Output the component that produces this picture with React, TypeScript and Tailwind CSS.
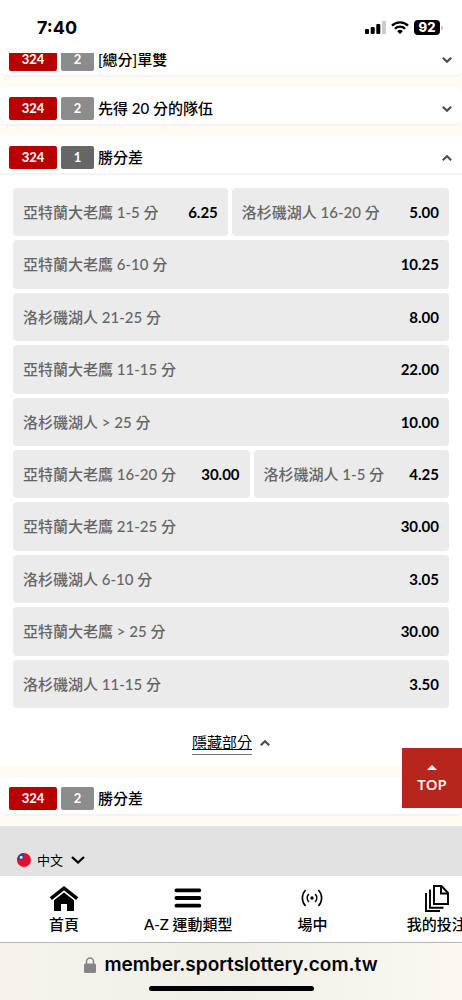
import clsx from "clsx";

interface Selection {
  name: string;
  odds: string;
}

interface MarketRowProps {
  code: string;
  count: number;
  title: string;
  open?: boolean;
}

const lines: Selection[][] = [
  [
    { name: "亞特蘭大老鷹 1-5 分", odds: "6.25" },
    { name: "洛杉磯湖人 16-20 分", odds: "5.00" },
  ],
  [{ name: "亞特蘭大老鷹 6-10 分", odds: "10.25" }],
  [{ name: "洛杉磯湖人 21-25 分", odds: "8.00" }],
  [{ name: "亞特蘭大老鷹 11-15 分", odds: "22.00" }],
  [{ name: "洛杉磯湖人 > 25 分", odds: "10.00" }],
  [
    { name: "亞特蘭大老鷹 16-20 分", odds: "30.00" },
    { name: "洛杉磯湖人 1-5 分", odds: "4.25" },
  ],
  [{ name: "亞特蘭大老鷹 21-25 分", odds: "30.00" }],
  [{ name: "洛杉磯湖人 6-10 分", odds: "3.05" }],
  [{ name: "亞特蘭大老鷹 > 25 分", odds: "30.00" }],
  [{ name: "洛杉磯湖人 11-15 分", odds: "3.50" }],
];

const Chevron = ({ up = false }: { up?: boolean }) => (
  <svg
    viewBox="0 0 10 8"
    className={clsx("h-2 w-2.5 shrink-0", up && "rotate-180")}
    fill="none"
    stroke="#4d4d4d"
    strokeWidth="2.2"
  >
    <path d="M0.8 1.8 5 5.8 9.2 1.8" />
  </svg>
);

const MarketRow = ({ code, count, title, open = false }: MarketRowProps) => (
  <button
    aria-expanded={open}
    className={clsx(
      "flex w-full items-center border-b-2 border-[#f3f3f8] bg-white pt-2.5 pr-2.5 pb-1 pl-[9px] text-left",
      !open && "rounded-md"
    )}
  >
    <span className="h-[23px] w-12 rounded-xs bg-[#b70000] text-center text-[13px] leading-[23px] font-bold text-white">
      {code}
    </span>
    <span
      className={clsx(
        "ml-1 h-[23px] w-[33px] rounded-xs text-center text-[13px] leading-[23px] font-bold text-white",
        open ? "bg-[#666666]" : "bg-[#8c8c8c]"
      )}
    >
      {count}
    </span>
    <span className="ml-1 flex-1 text-[15px] leading-[23px] font-medium text-black">
      {title}
    </span>
    <Chevron up={open} />
  </button>
);

const StatusBar = () => (
  <header className="flex h-[53px] items-center justify-between bg-white pr-[19px] pl-[37px] pt-0.5 font-['Inter',sans-serif]">
    <span className="text-lg font-bold">7:40</span>
    <div className="flex items-center gap-[5px]">
      <svg viewBox="0 0 21 13" className="h-[13px] w-[21px]">
        <rect x="0" y="8" width="4" height="5" rx="1" />
        <rect x="5.7" y="6" width="4" height="7" rx="1" />
        <rect x="11.3" y="3" width="4" height="10" rx="1" />
        <rect x="17" y="0" width="4" height="13" rx="1" fill="#cccccc" />
      </svg>
      <svg viewBox="0 0 18 13" className="h-[13px] w-[18px]" fill="none" stroke="#000" strokeWidth="2.3">
        <path d="M1 4.6a11.5 11.5 0 0 1 16 0" />
        <path d="M3.9 7.8a7.3 7.3 0 0 1 10.2 0" />
        <path d="M9 13 6.2 10.2a4 4 0 0 1 5.6 0Z" fill="#000" stroke="none" />
      </svg>
      <div className="flex items-center gap-px">
        <span className="h-[15px] w-[26px] rounded-sm bg-black text-center text-[13px] leading-[15px] font-extrabold text-white">
          92
        </span>
        <span className="h-1 w-0.5 rounded-r-full bg-[#c4c4c4]" />
      </div>
    </div>
  </header>
);

const HomeIcon = () => (
  <svg viewBox="0 0 28 25" className="h-[25px] w-7">
    <path d="M0.8 12.6 14 2.2l13.2 10.4" fill="none" stroke="#000" strokeWidth="3.4" />
    <path d="M4 14.2 14 6.4l10 7.8V25h-7v-7h-6v7H4Z" />
  </svg>
);

const MenuIcon = () => (
  <svg viewBox="0 0 28 20" className="h-5 w-7" stroke="#000" strokeWidth="3.8" strokeLinecap="round">
    <path d="M2.4 2.3h23M2.4 10h23M2.4 17.7h23" />
  </svg>
);

const LiveIcon = () => (
  <svg viewBox="0 0 22 18" className="h-[18px] w-[22px]" fill="none" stroke="#000" strokeWidth="1.6">
    <circle cx="11" cy="9" r="1.7" fill="#000" stroke="none" />
    <path d="M7.8 5a6 6 0 0 0 0 8M14.2 5a6 6 0 0 1 0 8" />
    <path d="M4.6 1a11.5 11.5 0 0 0 0 16M17.4 1a11.5 11.5 0 0 1 0 16" />
  </svg>
);

const BetsIcon = () => (
  <svg viewBox="0 0 24 27" className="h-[27px] w-6" fill="none" stroke="#000" strokeWidth="1.9">
    <path d="M9 1h7.5L23 7.8V19H9Z" />
    <path d="M16 1v7.5h7" />
    <path d="M5 4.5v18.2h13.5" />
    <path d="M1 8v18h14" />
  </svg>
);

const navItems = [
  { label: "首頁", icon: <HomeIcon /> },
  { label: "A-Z 運動類型", icon: <MenuIcon /> },
  { label: "場中", icon: <LiveIcon /> },
  { label: "我的投注", icon: <BetsIcon /> },
];

const App = () => {
  return (
    <div className="relative w-full overflow-hidden bg-[#fffbf3] font-['Lato','Noto_Sans_CJK_TC',sans-serif] text-black">
      <StatusBar />

      {/* The list is scrolled, its first row is partly under the status bar */}
      <main className="overflow-hidden">
        <div className="-mt-[15px] flex flex-col gap-2.5">
          <MarketRow code="324" count={2} title="[總分]單雙" />
          <MarketRow code="324" count={2} title="先得 20 分的隊伍" />
          <section className="bg-white">
            <MarketRow code="324" count={1} title="勝分差" open />
            <div className="grid min-h-[533px] auto-rows-fr gap-1 px-[13px] pt-[13px]">
              {lines.map((line) => (
                <div key={line[0].name} className="flex gap-1">
                  {line.map((item) => (
                    <button
                      key={item.name}
                      className="flex flex-auto items-center justify-between rounded bg-[#ebebeb] px-2.5 text-[15px] font-medium whitespace-nowrap"
                    >
                      <span className="text-[#666666]">{item.name}</span>
                      <span className="font-bold">{item.odds}</span>
                    </button>
                  ))}
                </div>
              ))}
            </div>
            <div className="flex justify-center pt-[22px] pb-3">
              <button className="flex items-center gap-2 text-[15px] leading-6">
                <span className="border-b border-[#777777] underline">
                  隱藏部分
                </span>
                <Chevron up />
              </button>
            </div>
          </section>
          <div className="relative">
            <MarketRow code="324" count={2} title="勝分差" />
            <a
              href="#"
              className="absolute right-0 bottom-2 flex size-15 flex-col items-center justify-center gap-0.5 bg-[#b5261c] pt-1 font-['Open_Sans',sans-serif] text-[15px] leading-6 font-semibold text-white"
            >
              <svg viewBox="0 0 10 5" className="h-[5px] w-2.5" fill="#fff">
                <path d="M5 0 10 5H0Z" />
              </svg>
              TOP
            </a>
          </div>
        </div>
      </main>

      <footer className="mt-2.5 bg-[#e2e2e2] px-[17px] pt-6 pb-1.5">
        <button className="flex items-center text-[13px] leading-5">
          <svg viewBox="0 0 14 14" className="size-3.5">
            <circle cx="7" cy="7" r="7" fill="#e0102f" />
            <path d="M7 0v7H0a7 7 0 0 1 7-7Z" fill="#1f4fa8" />
            <circle cx="4.2" cy="4.4" r="1.4" fill="#fff" />
          </svg>
          <span className="ml-1.5">中文</span>
          <svg viewBox="0 0 14 8" className="ml-2 h-2 w-3.5" fill="none" stroke="#000" strokeWidth="2.3">
            <path d="M1 1l6 5.5L13 1" />
          </svg>
        </button>
      </footer>

      <nav className="flex overflow-hidden border-b border-[#b5b5b5] bg-white pl-0.5">
        {navItems.map((item) => (
          <a
            key={item.label}
            href="#"
            className="flex w-[27%] shrink-0 flex-col items-center pt-2 pb-1.5 text-[15px] font-medium whitespace-nowrap"
          >
            <span className="flex h-7 items-center">{item.icon}</span>
            <span className="leading-6">{item.label}</span>
          </a>
        ))}
      </nav>

      <div className="flex h-[57px] flex-col items-center justify-between bg-linear-to-r from-[#f5f3ec] via-[#f0efe8] to-[#fbf9f1] pt-2 pb-[9px] font-['Inter',sans-serif]">
        <div className="flex items-center gap-2 text-[19px] leading-7 font-semibold">
          <svg viewBox="0 0 12 16" className="h-4 w-3">
            <rect x="0" y="6.5" width="12" height="9.5" rx="1.5" fill="#858585" />
            <path d="M2.5 7V4.5a3.5 3.5 0 0 1 7 0V7" fill="none" stroke="#858585" strokeWidth="1.5" />
          </svg>
          <span>member.sportslottery.com.tw</span>
        </div>
        <span className="h-[5px] w-[165px] rounded-full bg-black" />
      </div>
    </div>
  );
};

export default App;
